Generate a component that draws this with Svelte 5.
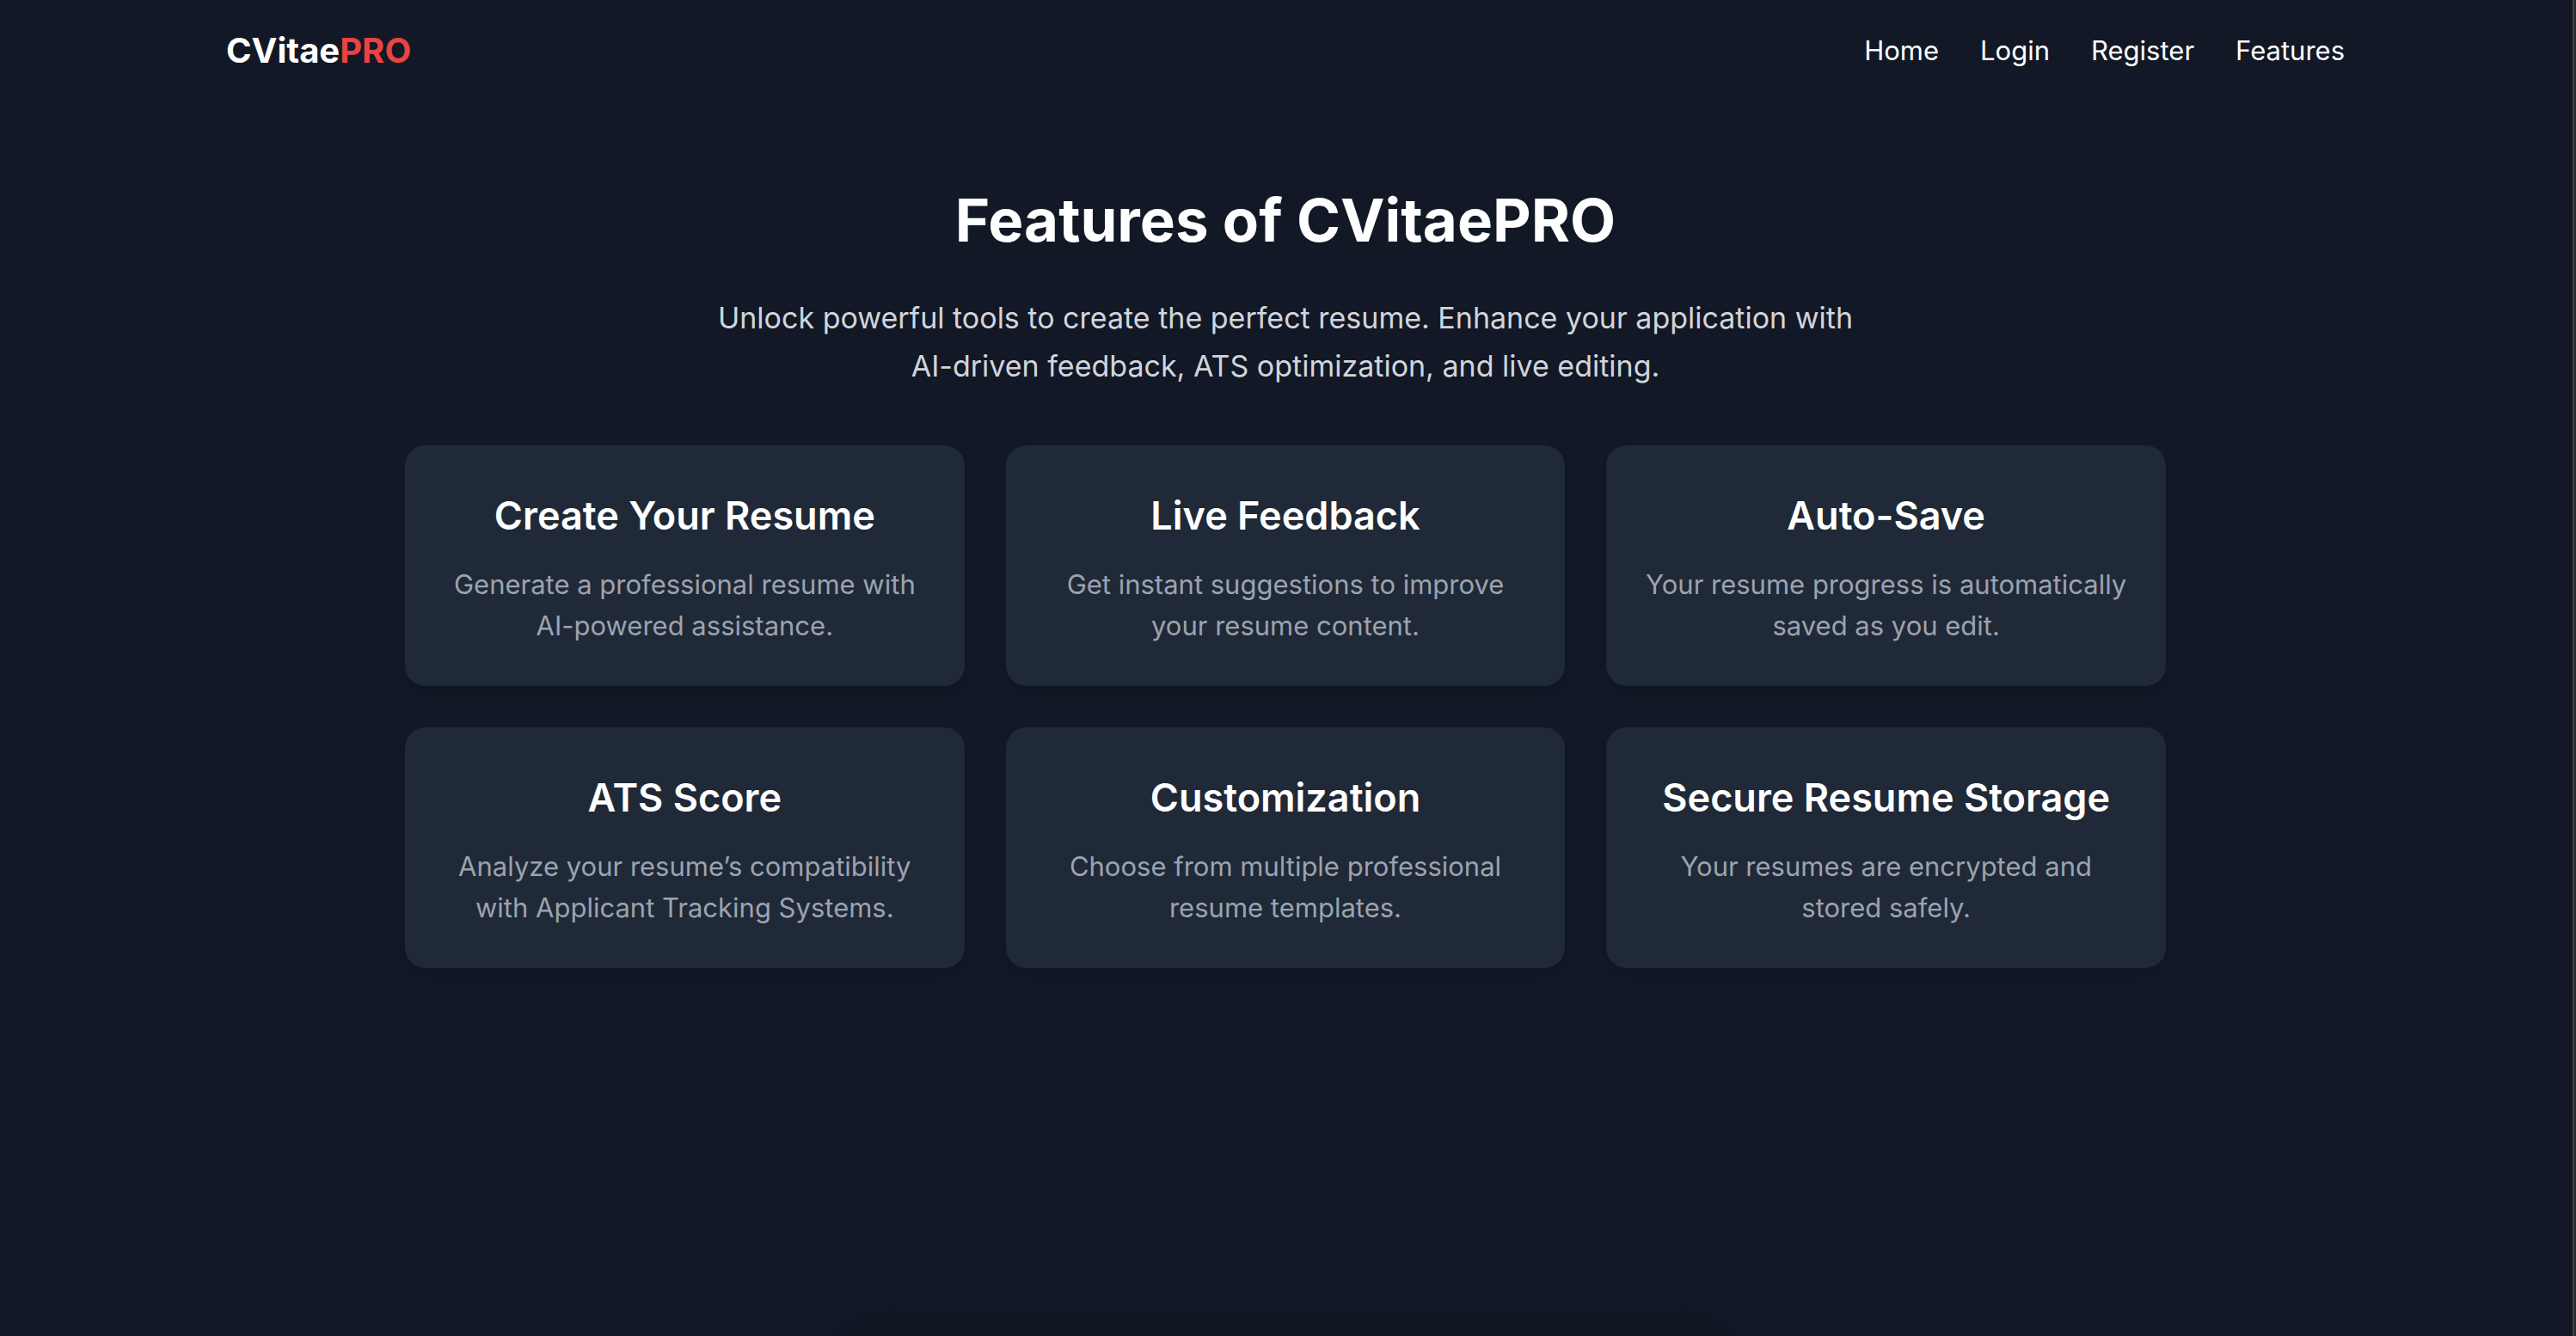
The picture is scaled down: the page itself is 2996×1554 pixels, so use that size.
<script>
  const links = ['Home', 'Login', 'Register', 'Features'];
  const features = [
    { title: 'Create Your Resume', text: 'Generate a professional resume with AI-powered assistance.' },
    { title: 'Live Feedback', text: 'Get instant suggestions to improve your resume content.' },
    { title: 'Auto-Save', text: 'Your resume progress is automatically saved as you edit.' },
    { title: 'ATS Score', text: 'Analyze your resume’s compatibility with Applicant Tracking Systems.' },
    { title: 'Customization', text: 'Choose from multiple professional resume templates.' },
    { title: 'Secure Resume Storage', text: 'Your resumes are encrypted and stored safely.' }
  ];
</script>

<div class="page">
  <header>
    <a class="logo" href="#home">CVitae<span>PRO</span></a>
    <nav>
      {#each links as link}
        <a href={'#' + link.toLowerCase()}>{link}</a>
      {/each}
    </nav>
  </header>
  <main>
    <h1>Features of CVitaePRO</h1>
    <p class="intro">
      Unlock powerful tools to create the perfect resume. Enhance your application with AI-driven feedback, ATS optimization, and live editing.
    </p>
    <div class="grid">
      {#each features as feature}
        <article>
          <h2>{feature.title}</h2>
          <p>{feature.text}</p>
        </article>
      {/each}
    </div>
  </main>
  <div class="glow"></div>
</div>

<style>
  :global(body) {
    background: #121826;
  }
  .page {
    box-sizing: border-box;
    display: flex;
    flex-direction: column;
    min-height: 100vh;
    overflow: hidden;
    padding-right: 4px;
    border-right: 2px solid #2a2a2a;
    box-shadow: inset -2px 0 #444347;
    background: #121826;
    color: #fff;
    font-family: Inter, "Liberation Sans", sans-serif;
  }
  header {
    box-sizing: border-box;
    display: flex;
    align-items: center;
    justify-content: space-between;
    width: 100%;
    max-width: 2560px;
    margin: 0 auto;
    padding: 32px 48px;
  }
  a {
    color: inherit;
    text-decoration: none;
  }
  .logo {
    font-size: 40px;
    font-weight: 700;
    line-height: 54px;
  }
  .logo span {
    color: #ea4341;
  }
  nav {
    display: flex;
    gap: 48px;
    font-size: 31px;
    line-height: 48px;
  }
  main {
    width: 100%;
    max-width: 2048px;
    margin: 0 auto;
    padding: 98px 0;
    text-align: center;
  }
  h1 {
    margin: 0 0 46px;
    font-size: 69px;
    font-weight: 700;
    line-height: 80px;
  }
  .intro {
    max-width: 1344px;
    margin: 0 auto 64px;
    color: #d1d5db;
    font-size: 34px;
    line-height: 56px;
  }
  .grid {
    display: grid;
    grid-template-columns: repeat(3, 1fr);
    gap: 48px;
  }
  article {
    padding: 50px 40px 46px;
    border-radius: 24px;
    background: #202937;
    box-shadow: 0 20px 30px -6px rgb(0 0 0 / 8%), 0 8px 12px -8px rgb(0 0 0 / 8%);
  }
  h2 {
    margin: 0 0 24px;
    font-size: 45px;
    font-weight: 600;
    line-height: 64px;
  }
  article p {
    margin: 0;
    color: #9ca3af;
    font-size: 31px;
    line-height: 48px;
  }
  .glow {
    width: 1000px;
    height: 40px;
    margin: auto auto -40px;
    border-radius: 40px;
    box-shadow: 0 16px 50px 20px rgb(16 22 28 / 60%);
  }
</style>
